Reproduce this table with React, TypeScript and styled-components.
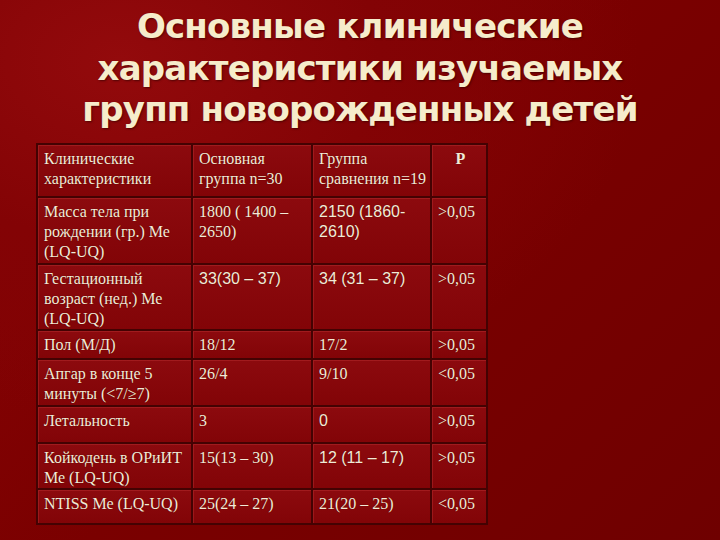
import React from "react";
import styled, { createGlobalStyle } from "styled-components";

const Global = createGlobalStyle`
  html, body { margin: 0; padding: 0; background: #760000; }
  #root { width: 720px; height: 540px; overflow: hidden; }
`;

const Slide = styled.div`
  width: 720px;
  height: 540px;
  box-sizing: border-box;
  background: radial-gradient(ellipse 520px 360px at 120px 60px, #930a0c 0%, #830305 50%, rgba(118,0,0,0) 100%),
    linear-gradient(135deg, #8a0406 0%, #7a0000 50%, #6f0000 100%);
  display: flex;
  flex-direction: column;
  padding: 6px 0 0 36px;
`;

const Title = styled.h1`
  margin: 0 0 0 -36px;
  width: 720px;
  height: 125px;
  text-align: center;
  font-family: "DejaVu Sans", Verdana, sans-serif;
  font-weight: bold;
  font-size: 34px;
  line-height: 41.5px;
  color: #f6eccb;
  text-shadow: 1px 1px 2px rgba(40, 0, 0, 0.6);
  letter-spacing: -0.8px;
`;

const Table = styled.table`
  margin-top: 12px;
  border-collapse: collapse;
  width: 450px;
  table-layout: fixed;
  border: 2px solid #420000;
`;

const Cell = styled.td<{ $sans?: boolean; $center?: boolean; $bold?: boolean }>`
  border: 2px solid #440202;
  box-shadow: inset 1px 1px 0 rgba(200, 60, 60, 0.35);
  background: linear-gradient(180deg, #8c0a0e 0%, #820407 100%);
  vertical-align: top;
  padding: 4px 3px 0 6px;
  color: #f3ead6;
  font-family: ${(p) => (p.$sans ? '"Liberation Sans", Arial, sans-serif' : '"Liberation Serif", "Times New Roman", serif')};
  font-size: 16px;
  font-weight: ${(p) => (p.$bold ? "bold" : "normal")};
  text-align: ${(p) => (p.$center ? "center" : "left")};
  line-height: 20px;
  text-shadow: 0 0 1px rgba(60, 0, 0, 0.8);
  white-space: nowrap;
`;

const Row = styled.tr<{ $h: number }>`
  height: ${(p) => p.$h}px;
`;

type C = { t: React.ReactNode; sans?: boolean };
const rows: { h: number; c: C[] }[] = [
  {
    h: 67,
    c: [
      { t: <>Масса тела при<br />рождении (гр.) Ме<br />(LQ-UQ)</> },
      { t: <>1800 ( 1400 –<br />2650)</> },
      { t: <>2150 (1860-<br />2610)</>, sans: true },
      { t: ">0,05" },
    ],
  },
  {
    h: 66,
    c: [
      { t: <>Гестационный<br />возраст (нед.) Ме<br />(LQ-UQ)</> },
      { t: "33(30 – 37)", sans: true },
      { t: "34 (31 – 37)", sans: true },
      { t: ">0,05" },
    ],
  },
  {
    h: 29,
    c: [{ t: "Пол (М/Д)" }, { t: "18/12" }, { t: "17/2" }, { t: ">0,05" }],
  },
  {
    h: 47,
    c: [
      { t: <>Апгар в конце 5<br />минуты (&lt;7/≥7)</> },
      { t: "26/4" },
      { t: "9/10" },
      { t: "<0,05" },
    ],
  },
  {
    h: 37,
    c: [{ t: "Летальность" }, { t: "3" }, { t: "0", sans: true }, { t: ">0,05" }],
  },
  {
    h: 45,
    c: [
      { t: <>Койкодень в ОРиИТ<br />Ме (LQ-UQ)</> },
      { t: "15(13 – 30)" },
      { t: "12 (11 – 17)", sans: true },
      { t: ">0,05" },
    ],
  },
  {
    h: 35,
    c: [{ t: "NTISS Ме (LQ-UQ)" }, { t: "25(24 – 27)" }, { t: "21(20 – 25)" }, { t: "<0,05" }],
  },
];

export default function App() {
  return (
    <>
      <Global />
      <Slide>
        <Title>
          Основные клинические
          <br />
          характеристики изучаемых
          <br />
          групп новорожденных детей
        </Title>
        <Table>
          <colgroup>
            <col style={{ width: 155 }} />
            <col style={{ width: 120 }} />
            <col style={{ width: 119 }} />
            <col style={{ width: 56 }} />
          </colgroup>
          <tbody>
            <Row $h={53}>
              <Cell>Клинические<br />характеристики</Cell>
              <Cell>Основная<br />группа n=30</Cell>
              <Cell>Группа<br />сравнения n=19</Cell>
              <Cell $center $bold>P</Cell>
            </Row>
            {rows.map((r, i) => (
              <Row key={i} $h={r.h}>
                {r.c.map((c, j) => (
                  <Cell key={j} $sans={c.sans}>{c.t}</Cell>
                ))}
              </Row>
            ))}
          </tbody>
        </Table>
      </Slide>
    </>
  );
}
